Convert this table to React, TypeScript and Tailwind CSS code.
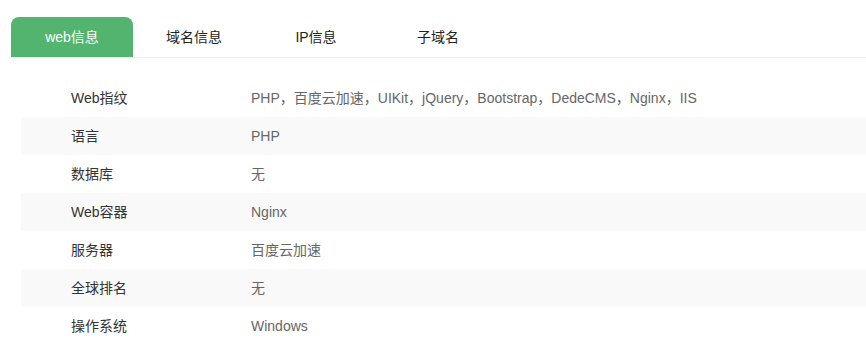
import React from 'react';

const tabs = ['web信息', '域名信息', 'IP信息', '子域名'];

const rows: [string, string][] = [
  ['Web指纹', 'PHP，百度云加速，UIKit，jQuery，Bootstrap，DedeCMS，Nginx，IIS'],
  ['语言', 'PHP'],
  ['数据库', '无'],
  ['Web容器', 'Nginx'],
  ['服务器', '百度云加速'],
  ['全球排名', '无'],
  ['操作系统', 'Windows'],
];

export default function App() {
  return (
    <div
      className="w-[866px] h-[355px] bg-white overflow-hidden pl-[11px] pt-[17px]"
      style={{ fontFamily: '"Liberation Sans", Arial, "Noto Sans CJK SC", sans-serif' }}
    >
      <div className="flex border-b border-[#eeeeee]">
        {tabs.map((t, i) => (
          <div
            key={t}
            className={`w-[122px] h-[40px] flex items-center justify-center text-[14px] ${
              i === 0 ? 'bg-[#52b46e] text-white rounded-t-[8px]' : 'text-[#222]'
            }`}
          >
            {t}
          </div>
        ))}
      </div>
      <div className="mt-[21px] ml-[10px]">
        {rows.map(([k, v], i) => (
          <div
            key={k}
            className={`flex h-[38px] items-center text-[14px] ${i % 2 === 1 ? 'bg-[#f9f9f9]' : ''}`}
          >
            <div className="w-[230px] pl-[50px] text-[#333]">{k}</div>
            <div className="text-[#666]">{v}</div>
          </div>
        ))}
      </div>
    </div>
  );
}
